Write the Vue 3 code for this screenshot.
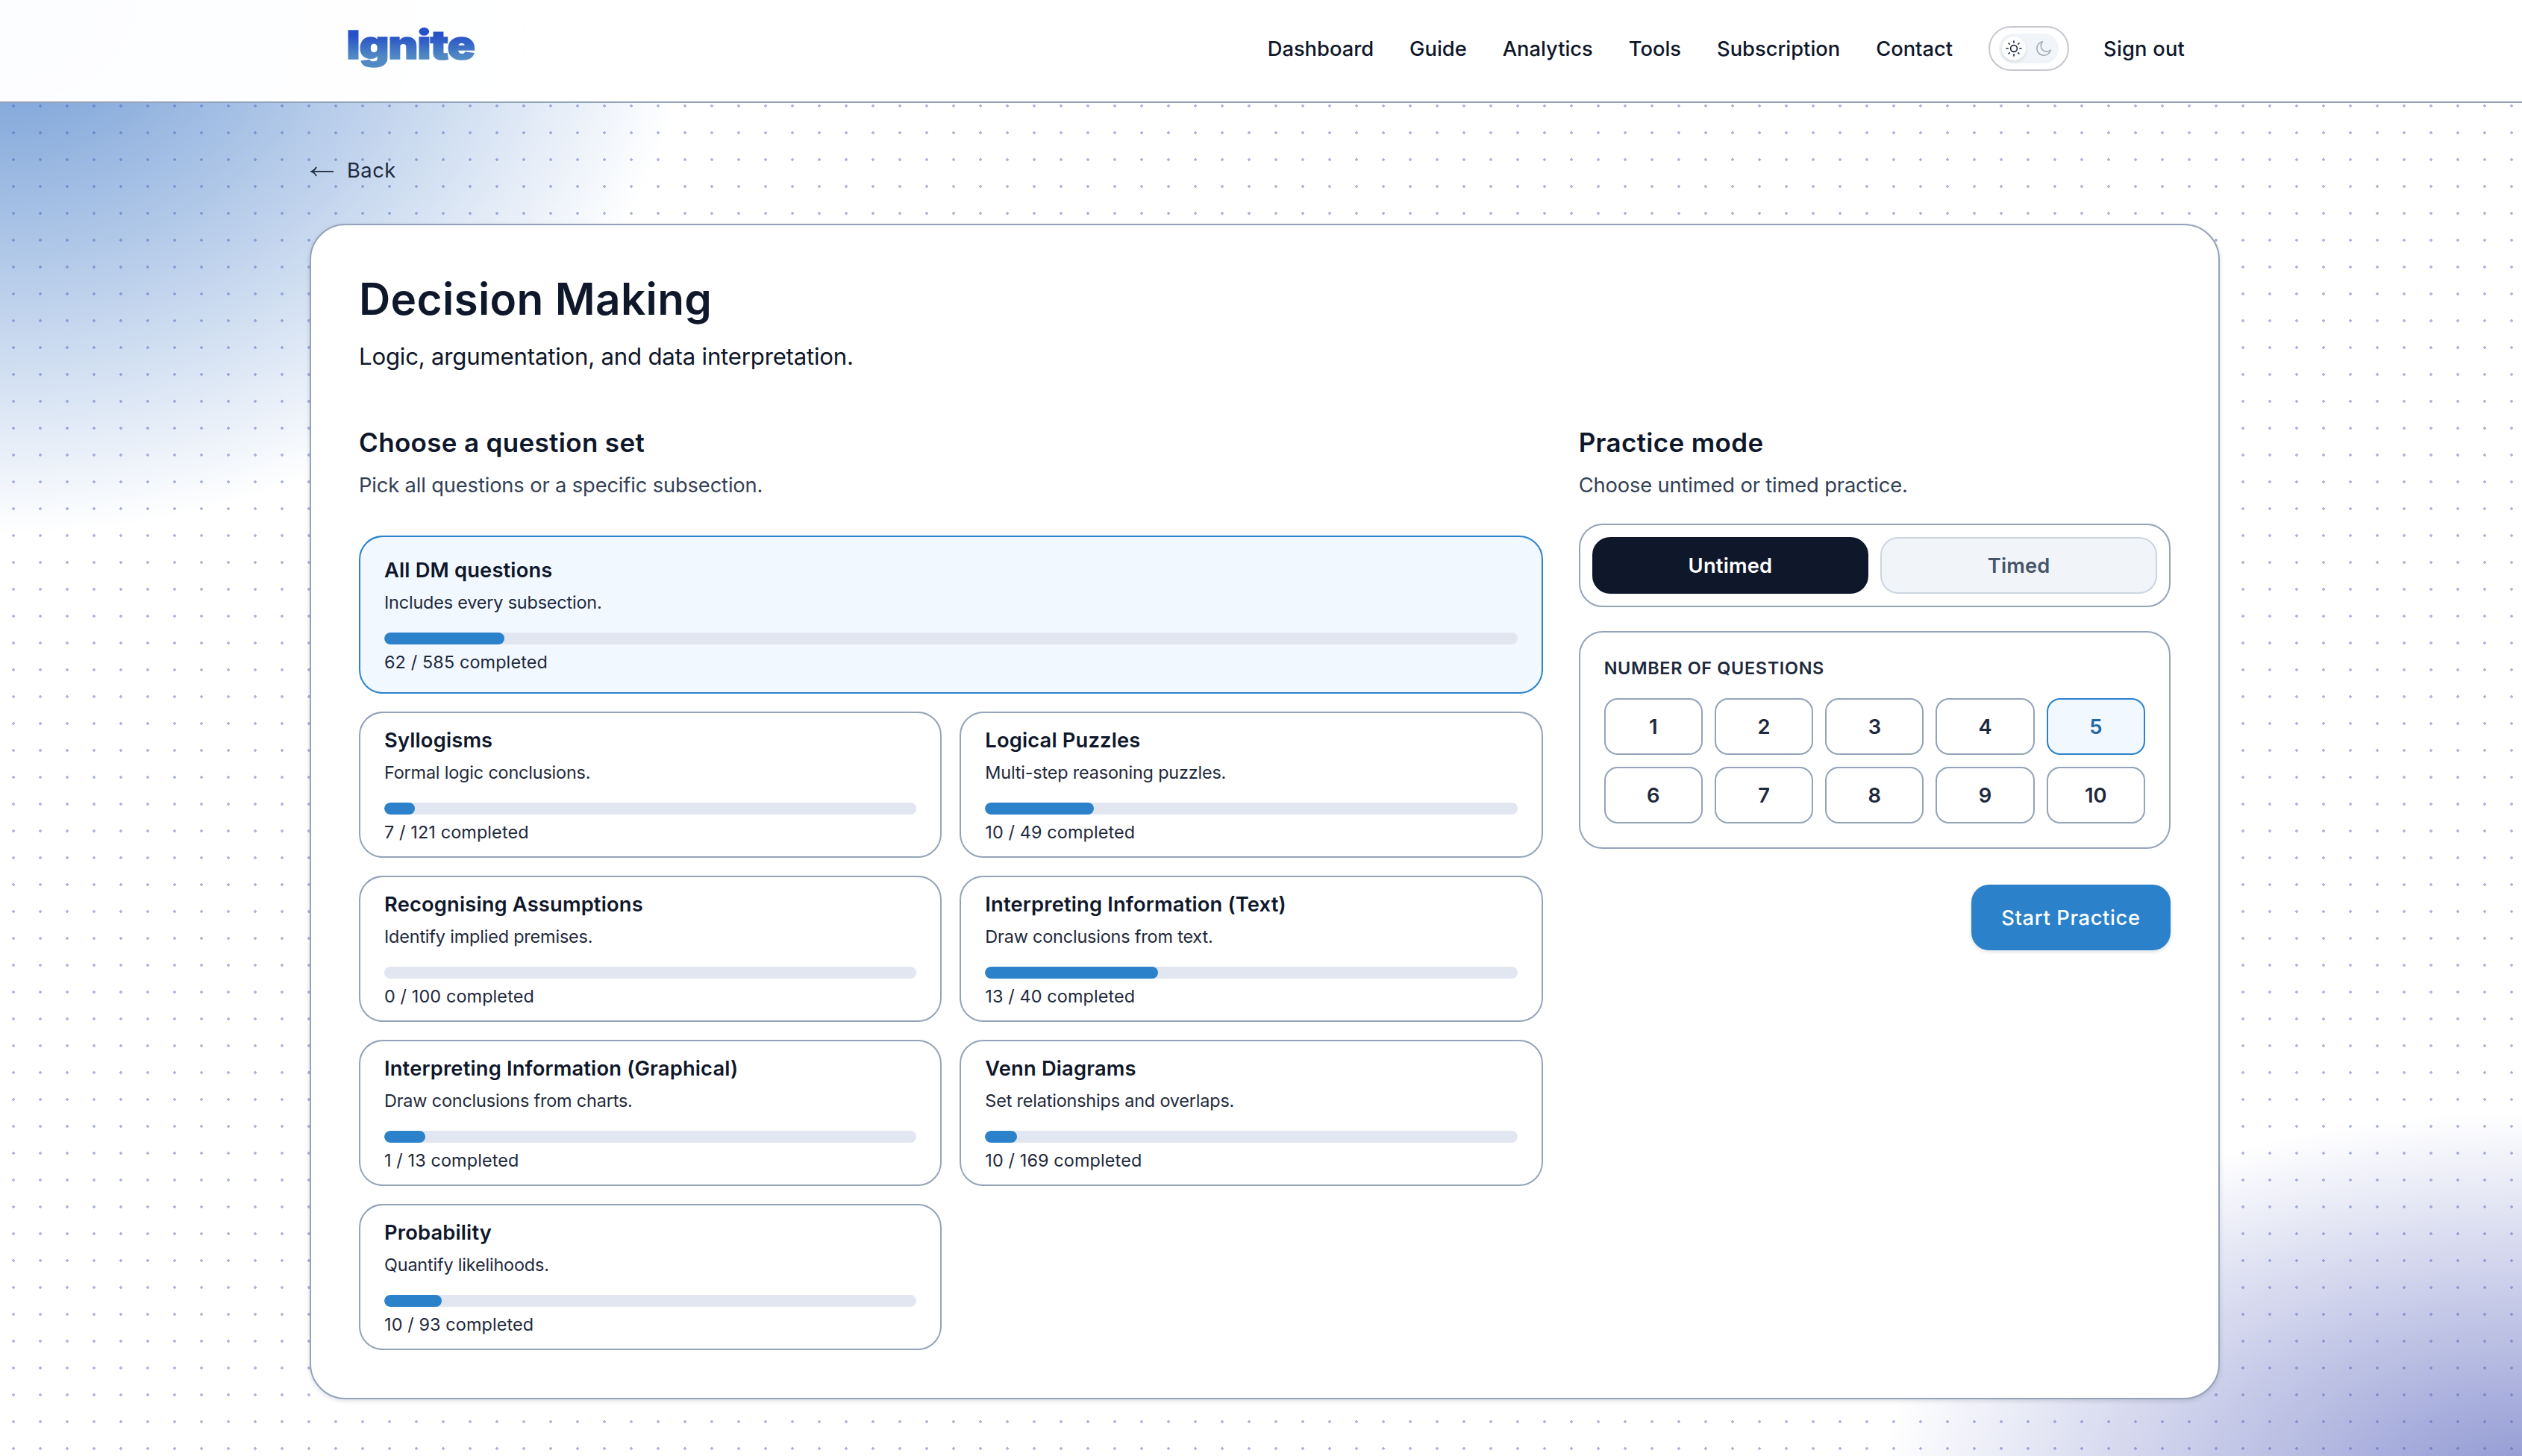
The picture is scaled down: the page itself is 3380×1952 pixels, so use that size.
<template>
  <div class="page">
    <header class="header">
      <a class="logo">Ignite</a>
      <nav class="nav">
        <a v-for="link in links" :key="link">{{ link }}</a>
        <button class="theme" aria-label="Theme">
          <span class="theme-track">
            <span class="theme-knob">
              <svg width="24" height="24" viewBox="0 0 24 24" fill="none" stroke="#1e293b" stroke-width="1.6" stroke-linecap="round">
                <circle cx="12" cy="12" r="4.4" />
                <path d="M12 2v2.2M12 19.8v2.2M2 12h2.2M19.8 12h2.2M5 5l1.3 1.3M17.7 17.7l1.3 1.3M5 19l1.3-1.3M17.7 6.3l1.3-1.3" />
              </svg>
            </span>
            <span class="theme-moon">
              <svg width="24" height="24" viewBox="0 0 24 24" fill="none" stroke="#a1a5b0" stroke-width="1.5" stroke-linejoin="round">
                <path d="M10.6 2.8A9.3 9.3 0 1 0 21.2 14 7.4 7.4 0 0 1 10.6 2.8z" />
              </svg>
            </span>
          </span>
        </button>
        <a class="sign-out">Sign out</a>
      </nav>
    </header>

    <main class="main">
      <a class="back">
        <svg width="32" height="16" viewBox="0 0 32 16" fill="none" stroke="#1e293b" stroke-width="1.8">
          <path d="M1.5 8H31" />
          <path d="M8 2C6.4 5 4.4 7 1.2 8 4.4 9 6.4 11 8 14" />
        </svg>
        <span>Back</span>
      </a>

      <section class="card">
        <h1>Decision Making</h1>
        <p class="lead">Logic, argumentation, and data interpretation.</p>

        <div class="columns">
          <div class="col">
            <h2>Choose a question set</h2>
            <p class="hint">Pick all questions or a specific subsection.</p>
            <div class="sets">
              <div
                v-for="set in sets"
                :key="set.title"
                class="set"
                :class="{ active: set.all }"
              >
                <h3>{{ set.title }}</h3>
                <p>{{ set.text }}</p>
                <div class="bar">
                  <div
                    v-if="set.done"
                    class="fill"
                    :style="{ width: `${percent(set)}%` }"
                  ></div>
                </div>
                <p class="count">{{ set.done }} / {{ set.total }} completed</p>
              </div>
            </div>
          </div>

          <div class="col">
            <h2>Practice mode</h2>
            <p class="hint">Choose untimed or timed practice.</p>
            <div class="modes">
              <button
                v-for="m in ['Untimed', 'Timed']"
                :key="m"
                class="mode"
                :class="{ selected: mode === m }"
                @click="mode = m"
              >{{ m }}</button>
            </div>
            <div class="numbers">
              <h4>Number of questions</h4>
              <div class="grid">
                <button
                  v-for="n in 10"
                  :key="n"
                  class="number"
                  :class="{ selected: count === n }"
                  @click="count = n"
                >{{ n }}</button>
              </div>
            </div>
            <button class="start">Start Practice</button>
          </div>
        </div>
      </section>
    </main>
  </div>
</template>

<script setup>
import { ref } from 'vue'

const links = ['Dashboard', 'Guide', 'Analytics', 'Tools', 'Subscription', 'Contact']

const sets = [
  { title: 'All DM questions', text: 'Includes every subsection.', done: 62, total: 585, all: true },
  { title: 'Syllogisms', text: 'Formal logic conclusions.', done: 7, total: 121 },
  { title: 'Logical Puzzles', text: 'Multi-step reasoning puzzles.', done: 10, total: 49 },
  { title: 'Recognising Assumptions', text: 'Identify implied premises.', done: 0, total: 100 },
  { title: 'Interpreting Information (Text)', text: 'Draw conclusions from text.', done: 13, total: 40 },
  { title: 'Interpreting Information (Graphical)', text: 'Draw conclusions from charts.', done: 1, total: 13 },
  { title: 'Venn Diagrams', text: 'Set relationships and overlaps.', done: 10, total: 169 },
  { title: 'Probability', text: 'Quantify likelihoods.', done: 10, total: 93 },
]

const mode = ref('Untimed')
const count = ref(5)

const percent = (set) => (set.done / set.total) * 100
</script>

<style>
body {
  margin: 0;
  overflow: hidden;
}
</style>

<style scoped>
.page {
  box-sizing: border-box;
  height: 1952px;
  overflow: hidden;
  color: #0f172a;
  font-family: Inter, "Liberation Sans", sans-serif;
  font-size: 27.3px;
  background:
    radial-gradient(circle at 18px 18px, rgba(67, 86, 184, 0.42) 2px, transparent 2.1px) 0 16px / 36px 36px,
    radial-gradient(925px 717px at 0 0, rgb(105, 150, 211), rgba(255, 255, 255, 0)),
    radial-gradient(862px 500px at 3380px 1990px, rgb(143, 151, 210), rgba(255, 255, 255, 0)),
    #fff;
}

h1, h2, h3, h4, p {
  margin: 0;
}

button {
  box-sizing: border-box;
  margin: 0;
  padding: 0;
  font: inherit;
  color: inherit;
}

/* header */
.header {
  box-sizing: border-box;
  display: flex;
  align-items: center;
  justify-content: space-between;
  height: 138px;
  padding: 0 452px 6px 461px;
  border-bottom: 2px solid #94a3b8;
  background: rgba(255, 255, 255, 0.98);
}

.logo {
  margin-bottom: 10px;
  padding: 0 3px;
  line-height: 64px;
  font-size: 52.5px;
  font-weight: 900;
  letter-spacing: -1px;
  color: transparent;
  background: linear-gradient(#2650c8 30%, #5189c4 75%);
  -webkit-background-clip: text;
  background-clip: text;
  -webkit-text-stroke: 1.5px transparent;
  transform: scaleX(1.18);
  transform-origin: left;
}

.nav {
  display: flex;
  align-items: center;
  gap: 48px;
  font-weight: 500;
}

.theme {
  display: flex;
  align-items: center;
  justify-content: center;
  width: 108px;
  height: 60px;
  border: 2px solid #c7c7d0;
  border-radius: 30px;
  background: #fff;
}

.theme-track {
  box-sizing: border-box;
  display: flex;
  align-items: center;
  gap: 8px;
  width: 80px;
  height: 40px;
  padding: 4px;
  border-radius: 20px;
  background: #f1f5f9;
}

.theme-knob,
.theme-moon {
  display: flex;
  align-items: center;
  justify-content: center;
  width: 32px;
  height: 32px;
  border-radius: 50%;
}

.theme-knob {
  background: #fff;
  box-shadow: 0 2px 4px rgba(15, 23, 42, 0.12);
}

.sign-out {
  margin-left: -2px;
  letter-spacing: 0.2px;
}

/* content */
.main {
  padding: 66px 405px 0 415px;
}

.back {
  display: flex;
  align-items: center;
  gap: 17px;
  height: 48px;
  padding-left: 1px;
  color: #1e293b;
  letter-spacing: 0.5px;
}

.back svg {
  position: relative;
  top: 2px;
}

.card {
  box-sizing: border-box;
  height: 1576px;
  margin-top: 48px;
  padding: 64px;
  border: 2px solid #94a3b8;
  border-radius: 48px;
  background: #fff;
  box-shadow: 0 2px 6px rgba(15, 23, 42, 0.14);
}

h1 {
  line-height: 70px;
  font-size: 58.5px;
  font-weight: 600;
  letter-spacing: 0.32px;
}

.lead {
  margin-top: 18px;
  line-height: 48px;
  font-size: 31.2px;
  letter-spacing: -0.22px;
}

.columns {
  display: grid;
  grid-template-columns: 2fr 1fr;
  gap: 48px;
  margin-top: 63px;
}

.col {
  display: flex;
  flex-direction: column;
  min-width: 0;
}

h2 {
  line-height: 56px;
  font-size: 35px;
  font-weight: 600;
  letter-spacing: 0.34px;
}

.hint {
  margin-top: 10px;
  line-height: 40px;
  letter-spacing: -0.14px;
  color: #334155;
}

.sets {
  display: grid;
  grid-template-columns: 1fr 1fr;
  gap: 24px;
  margin-top: 47px;
}

.set {
  padding: 17px 32px 16px;
  border: 2px solid #94a3b8;
  border-radius: 32px;
  background: #fff;
}

.set.active {
  grid-column: 1 / -1;
  padding: 25px 32px 24px;
  border-color: #2b82cb;
  background: #f1f8ff;
}

h3 {
  line-height: 40px;
  font-size: 27.3px;
  font-weight: 600;
  letter-spacing: 0.17px;
}

.set p {
  margin-top: 7px;
  line-height: 32px;
  font-size: 23.4px;
  letter-spacing: -0.17px;
  color: #1e293b;
}

.set .count {
  margin-top: 8px;
  letter-spacing: 0.12px;
}

.bar {
  height: 16px;
  margin-top: 24px;
  border-radius: 8px;
  overflow: hidden;
  background: #e2e6f0;
}

.fill {
  height: 100%;
  border-radius: 8px;
  background: #2b82cb;
}

/* practice mode */
.modes {
  display: grid;
  grid-template-columns: 1fr 1fr;
  gap: 16px;
  margin-top: 31px;
  padding: 16px;
  border: 2px solid #94a3b8;
  border-radius: 32px;
}

.mode {
  height: 76px;
  border: 2px solid #cbd5e1;
  border-radius: 24px;
  background: #f1f5f9;
  color: #475569;
  font-weight: 600;
  letter-spacing: 0.2px;
}

.mode.selected {
  border-color: #0f172a;
  background: #0f172a;
  color: #fff;
}

.numbers {
  margin-top: 32px;
  padding: 32px;
  border: 2px solid #94a3b8;
  border-radius: 32px;
}

h4 {
  line-height: 32px;
  font-size: 23.4px;
  font-weight: 600;
  letter-spacing: 0.68px;
  text-transform: uppercase;
  color: #1e293b;
}

.grid {
  display: grid;
  grid-template-columns: repeat(5, 1fr);
  gap: 16px;
  margin-top: 24px;
}

.number {
  height: 76px;
  border: 2px solid #94a3b8;
  border-radius: 18px;
  background: #fff;
  color: #1e293b;
  font-weight: 600;
}

.number.selected {
  border-color: #2b82cb;
  background: #f1f8ff;
  color: #2265a3;
}

.start {
  align-self: flex-end;
  width: 267px;
  height: 88px;
  margin-top: 48px;
  border: 0;
  border-radius: 24px;
  background: #2b82cb;
  color: #fff;
  font-weight: 500;
  letter-spacing: 0.65px;
  box-shadow: 0 2px 5px rgba(15, 23, 42, 0.14);
}
</style>
